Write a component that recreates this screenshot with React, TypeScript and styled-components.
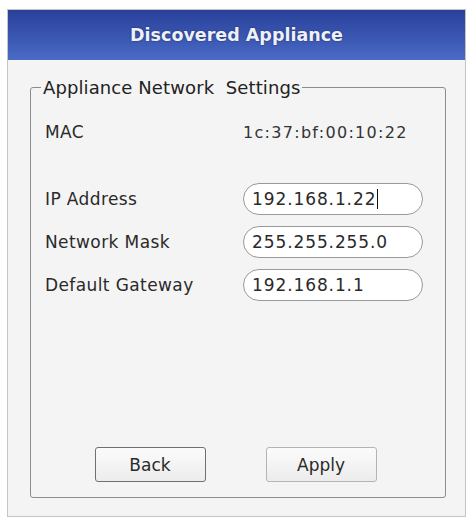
import React from 'react';
import styled, { createGlobalStyle } from 'styled-components';

const GlobalStyle = createGlobalStyle`
  html, body {
    margin: 0;
    padding: 0;
    background: #ffffff;
  }
  body {
    font-family: "DejaVu Sans", "Liberation Sans", sans-serif;
  }
`;

const Window = styled.div`
  box-sizing: border-box;
  width: 459px;
  height: 508px;
  margin: 9px 0 0 7px;
  border: 1px solid #c4c4c4;
  background: #f4f4f4;
  display: flex;
  flex-direction: column;
`;

const TitleBar = styled.div`
  height: 50px;
  flex-shrink: 0;
  display: flex;
  align-items: center;
  justify-content: center;
  background: linear-gradient(180deg, #2a419b 0%, #3a57b2 55%, #4a6bc6 100%);
  color: #eef0fa;
  font-size: 17.5px;
  font-weight: bold;
  text-shadow: 0 0 2px rgba(0, 0, 0, 0.5);
`;

const Body = styled.div`
  flex: 1;
  display: flex;
  padding: 17px 19px 18px 22px;
`;

const Group = styled.fieldset`
  flex: 1;
  margin: 0;
  padding: 0 15px 15px 14px;
  border: 1px solid #8c8c8c;
  border-radius: 3px;
  display: flex;
  flex-direction: column;
`;

const Legend = styled.legend`
  margin-left: -4px;
  padding: 0 2px;
  font-size: 18px;
  letter-spacing: 0.1px;
  color: #222;
  white-space: pre;
`;

const Form = styled.div`
  display: grid;
  grid-template-columns: 198px 180px;
  row-gap: 11px;
  align-items: center;
  margin-top: 24px;
`;

const Label = styled.span<{ $gapAfter?: number }>`
  font-size: 17px;
  color: #2a2a2a;
  letter-spacing: 0.4px;
  margin-bottom: ${p => p.$gapAfter ?? 0}px;
`;

const Value = styled.span<{ $gapAfter?: number }>`
  font-size: 16px;
  color: #333;
  letter-spacing: 1.3px;
  margin-bottom: ${p => p.$gapAfter ?? 0}px;
`;

const Field = styled.div`
  box-sizing: border-box;
  height: 32px;
  border: 1px solid #9a9a9a;
  border-radius: 16px;
  background: #ffffff;
  padding: 0 8px;
  display: flex;
  align-items: center;
  font-size: 17px;
  color: #2a2a2a;
  letter-spacing: 0.9px;
`;

const Caret = styled.span`
  display: inline-block;
  width: 1px;
  height: 20px;
  background: #111;
  margin-left: 1px;
`;

const Spacer = styled.div`
  flex: 1;
`;

const Buttons = styled.div`
  display: flex;
  justify-content: center;
  gap: 60px;
  padding-right: 4px;
`;

const Button = styled.button<{ $focused?: boolean }>`
  box-sizing: border-box;
  width: 111px;
  height: 35px;
  border: 1px solid ${p => (p.$focused ? '#707070' : '#b4b4b4')};
  border-radius: 3px;
  background: linear-gradient(180deg, #fbfbfb 0%, #ececec 100%);
  font-family: "DejaVu Sans", "Liberation Sans", sans-serif;
  font-size: 17px;
  color: #2a2a2a;
  padding: 0;
`;

export default function App() {
  return (
    <>
      <GlobalStyle />
      <Window>
        <TitleBar>Discovered Appliance</TitleBar>
        <Body>
          <Group>
            <Legend>{'Appliance Network  Settings'}</Legend>
            <Form>
              <Label $gapAfter={30}>MAC</Label>
              <Value $gapAfter={30}>1c:37:bf:00:10:22</Value>
              <Label>IP Address</Label>
              <Field>
                192.168.1.22
                <Caret />
              </Field>
              <Label>Network Mask</Label>
              <Field>255.255.255.0</Field>
              <Label>Default Gateway</Label>
              <Field>192.168.1.1</Field>
            </Form>
            <Spacer />
            <Buttons>
              <Button $focused>Back</Button>
              <Button>Apply</Button>
            </Buttons>
          </Group>
        </Body>
      </Window>
    </>
  );
}
